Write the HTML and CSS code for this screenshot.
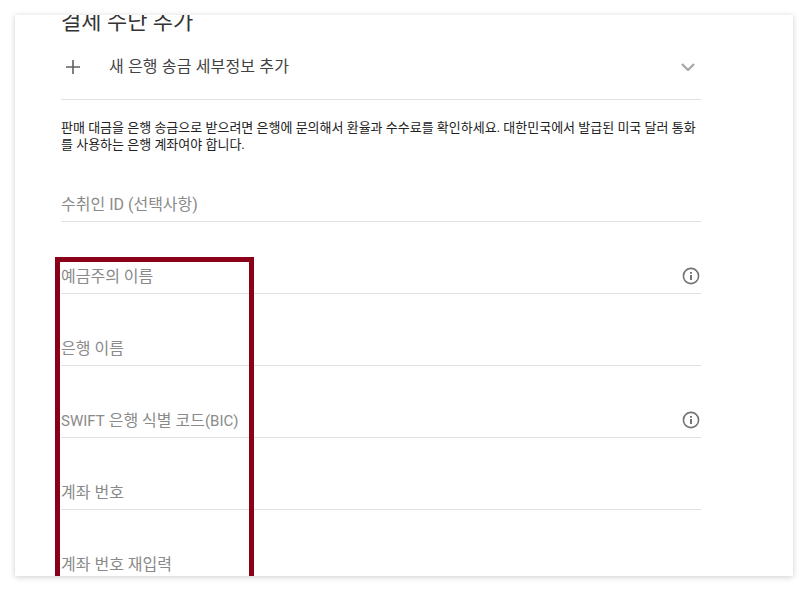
FILE: index.html
```html
<!DOCTYPE html>
<html lang="ko">
<head>
  <meta charset="UTF-8">
  <meta name="viewport" content="width=device-width, initial-scale=1.0">
  <title>결제 수단 추가</title>
  <link rel="stylesheet" href="styles.css">
</head>
<body>
  <div class="card">
    <div class="card-scroll">
      <h2 class="title">결제 수단 추가</h2>

      <div class="add-row">
        <svg class="plus" viewBox="0 0 16 16" width="16" height="16"><path d="M8 1v14M1 8h14"/></svg>
        <span class="add-label">새 은행 송금 세부정보 추가</span>
        <svg class="chevron" viewBox="0 0 14 8" width="14" height="8"><path d="M1 1l6 6 6-6"/></svg>
      </div>

      <p class="notice">판매 대금을 은행 송금으로 받으려면 은행에 문의해서 환율과 수수료를 확인하세요. 대한민국에서 발급된 미국 달러 통화를 사용하는 은행 계좌여야 합니다.</p>

      <div class="field field-first"><span class="placeholder">수취인 ID (선택사항)</span></div>
      <div class="field">
        <span class="placeholder">예금주의 이름</span>
        <svg class="info" viewBox="0 0 18 18" width="18" height="18"><circle cx="9" cy="9" r="7.6"/><path d="M9 8v5M9 5v1.8"/></svg>
      </div>
      <div class="field"><span class="placeholder">은행 이름</span></div>
      <div class="field">
        <span class="placeholder"><span class="latin">SWIFT</span> 은행 식별 코드<span class="latin">(BIC)</span></span>
        <svg class="info" viewBox="0 0 18 18" width="18" height="18"><circle cx="9" cy="9" r="7.6"/><path d="M9 8v5M9 5v1.8"/></svg>
      </div>
      <div class="field"><span class="placeholder">계좌 번호</span></div>
      <div class="field"><span class="placeholder">계좌 번호 재입력</span></div>
    </div>
    <!-- annotation box drawn over the form -->
    <div class="highlight"></div>
  </div>
</body>
</html>
```

FILE: styles.css
```css
* { box-sizing: border-box; margin: 0; padding: 0; }
html, body { background: #fff; }
body {
  font-family: Roboto, "Noto Sans CJK KR", sans-serif;
  padding: 15px;
}
/* Card, content is scrolled so the title is cut off */
.card {
  position: relative;
  width: 778px; height: 561px;
  background: #fff;
  overflow: hidden;
  box-shadow: 0 1px 6px rgba(0,0,0,0.2);
}
.card-scroll { margin-top: -8px; padding: 0 92px 0 46px; }
.title {
  font-size: 22px; font-weight: 400; line-height: 30px;
  color: #333;
  height: 28px;
}
/* Add row */
.add-row {
  display: flex; align-items: center;
  height: 65px;
  padding: 0 6px 0 4px;
  border-bottom: 1px solid #e0e0e0;
  margin-bottom: 19px;
}
.plus path { fill: none; stroke: #616161; stroke-width: 1.6; }
.add-label {
  margin-left: 28px; padding-bottom: 4px; flex: 1;
  font-size: 16px; letter-spacing: 0.15px; color: #424242;
}
.chevron path { fill: none; stroke: #a6a6a6; stroke-width: 2.2; }
.notice { font-size: 13px; line-height: 17px; color: #212121; }
/* Form fields */
.field {
  display: flex; align-items: flex-end; justify-content: space-between;
  height: 72px;
  padding-bottom: 4px;
  border-bottom: 1px solid #e0e0e0;
}
.field-first { height: 69px; }
.placeholder { font-size: 16px; line-height: 24px; color: #8a8a8a; }
.latin { font-size: 15px; }
.info { margin-bottom: 4px; margin-right: 1px; }
.info circle { fill: none; stroke: #757575; stroke-width: 1.6; }
.info path { fill: none; stroke: #757575; stroke-width: 2; }
.highlight {
  position: absolute; left: 40px; top: 242px;
  width: 199px; height: 400px;
  border: 5px solid #8a0018;
}
```
